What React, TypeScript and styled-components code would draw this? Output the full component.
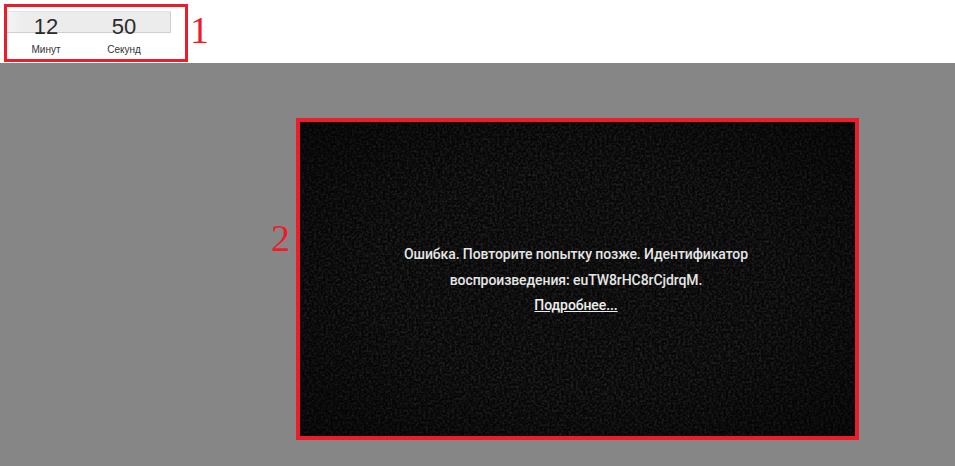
import styled, { createGlobalStyle } from "styled-components";

const GlobalStyle = createGlobalStyle`
  html, body {
    margin: 0;
    padding: 0;
    background: #fff;
  }
`;

const Page = styled.div`
  width: 955px;
  height: 466px;
  overflow: hidden;
  display: flex;
  flex-direction: column;
`;

const TopBar = styled.div`
  height: 63px;
  flex: none;
  box-sizing: border-box;
  padding: 4px 0 0 4px;
  display: flex;
  align-items: flex-start;
  gap: 2px;
  background: #fff;
`;

const TimerFrame = styled.div`
  width: 184px;
  height: 58px;
  box-sizing: border-box;
  border: 3px solid #ec1c2a;
  padding-top: 4px;
`;

const TimerBar = styled.div`
  width: 164px;
  height: 22px;
  box-sizing: border-box;
  background: linear-gradient(to right, #f4f4f4, #ececec 12%);
  border-right: 1px solid #cfcfcf;
  border-bottom: 1px solid #cfcfcf;
  border-top: 1px solid #e4e4e4;
  display: flex;
`;

const TimerNumber = styled.div`
  width: 78px;
  padding-top: 4px;
  font: 22px/22px "Liberation Sans", Arial, sans-serif;
  color: #2b2b2b;
  text-align: center;
`;

const TimerLabels = styled.div`
  display: flex;
  margin-top: 10px;
  width: 164px;
`;

const TimerLabel = styled.div`
  width: 78px;
  font: 10px/14px "Liberation Sans", Arial, sans-serif;
  color: #333;
  text-align: center;
`;

const Marker = styled.div`
  font: 38px/40px "Liberation Serif", "Times New Roman", serif;
  color: #ec1c2a;
`;

const TopMarker = styled(Marker)`
  margin-top: 6px;
`;

const Stage = styled.div`
  flex: 1;
  background: #868686;
  padding: 55px 0 0 271px;
  display: flex;
  align-items: flex-start;
  gap: 6px;
`;

const StageMarker = styled(Marker)`
  margin-top: 100px;
`;

const Player = styled.div`
  position: relative;
  width: 563px;
  height: 322px;
  box-sizing: border-box;
  border: 4px solid #ec1c2a;
  background: #070707;
  overflow: hidden;
  display: flex;
  flex-direction: column;
  align-items: center;
  padding: 119px 3px 0 0;
`;

const Noise = styled.svg`
  position: absolute;
  inset: 0;
  width: 100%;
  height: 100%;
  opacity: 0.16;
`;

const Vignette = styled.div`
  position: absolute;
  inset: 0;
  background: radial-gradient(ellipse at center, rgba(0, 0, 0, 0) 50%, rgba(0, 0, 0, 0.45) 100%);
`;

const Message = styled.div`
  position: relative;
  font: 500 14px/26px Roboto, "Liberation Sans", sans-serif;
  letter-spacing: -0.08px;
  color: #e6e6e6;
  text-align: center;
`;

const MoreLink = styled.a`
  position: relative;
  font: 500 14px/22px Roboto, "Liberation Sans", sans-serif;
  letter-spacing: -0.08px;
  color: #eeeeee;
  text-decoration: underline;
  margin-top: 1px;
`;

export default function App() {
  return (
    <>
      <GlobalStyle />
      <Page>
        <TopBar>
          <TimerFrame>
            <TimerBar>
              <TimerNumber>12</TimerNumber>
              <TimerNumber>50</TimerNumber>
            </TimerBar>
            <TimerLabels>
              <TimerLabel>Минут</TimerLabel>
              <TimerLabel>Секунд</TimerLabel>
            </TimerLabels>
          </TimerFrame>
          <TopMarker>1</TopMarker>
        </TopBar>
        <Stage>
          <StageMarker>2</StageMarker>
          <Player>
            <Noise aria-hidden="true">
              <filter id="grain">
                <feTurbulence type="fractalNoise" baseFrequency="0.42" numOctaves="2" seed="4" />
                <feColorMatrix
                  type="matrix"
                  values="0 0 0 0 1  0 0 0 0 1  0 0 0 0 1  1.6 0 0 0 -0.6"
                />
              </filter>
              <rect width="100%" height="100%" filter="url(#grain)" />
            </Noise>
            <Vignette />
            <Message>
              Ошибка. Повторите попытку позже. Идентификатор
              <br />
              воспроизведения: euTW8rHC8rCjdrqM.
            </Message>
            <MoreLink href="#">Подробнее...</MoreLink>
          </Player>
        </Stage>
      </Page>
    </>
  );
}
